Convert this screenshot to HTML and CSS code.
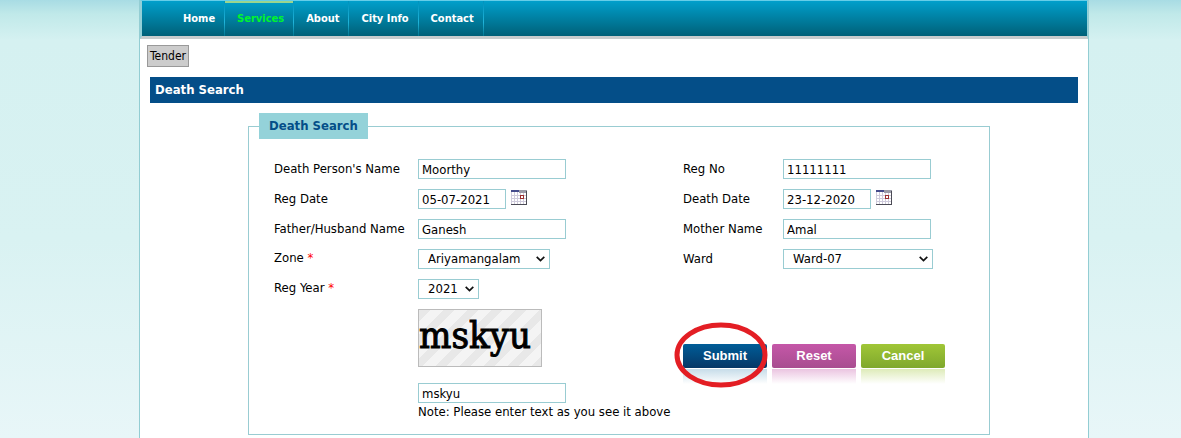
FILE: index.html
```html
<!DOCTYPE html>
<html lang="en">
<head>
  <meta charset="UTF-8">
  <meta name="viewport" content="width=device-width, initial-scale=1.0">
  <title>Death Search</title>
  <link rel="stylesheet" href="styles.css">
</head>
<body>

<div class="page">
  <nav class="menu">
    <a href="#">Home</a>
    <a href="#" class="active">Services</a>
    <a href="#">About</a>
    <a href="#">City Info</a>
    <a href="#">Contact</a>
  </nav>

  <div class="content">
    <a href="#" class="tender">Tender</a>
    <h1 class="title">Death Search</h1>

    <form onsubmit="return false">
      <fieldset class="search">
        <legend>Death Search</legend>
        <div class="fields">
          <label for="name">Death Person's Name</label>
          <div class="cell"><input type="text" id="name" value="Moorthy"></div>
          <label for="regno">Reg No</label>
          <div class="cell"><input type="text" id="regno" value="11111111"></div>

          <label for="regdate">Reg Date</label>
          <div class="cell">
            <input type="text" id="regdate" class="date" value="05-07-2021">
            <button type="button" class="cal" aria-label="Pick reg date">
              <svg width="16" height="15" viewBox="0 0 16 15" shape-rendering="crispEdges">
                <rect width="16" height="15" fill="#fff"/>
                <path d="M0 5.5h15M0 8.5h15M0 11.5h15M3.5 2v12M6.5 2v12M9.5 2v12M12.5 2v12M.5 2v12" stroke="#cfcbdc" fill="none"/>
                <rect width="8" height="2" fill="#454c8c"/>
                <rect x="8" width="8" height="3" fill="#9a9ba8"/>
                <rect x="9.5" y="5.5" width="3" height="3" fill="#fff" stroke="#9c3030"/>
                <path d="M15.5 1v14M0 14.5h16" stroke="#4b4b55" fill="none"/>
              </svg>
            </button>
          </div>
          <label for="deathdate">Death Date</label>
          <div class="cell">
            <input type="text" id="deathdate" class="date" value="23-12-2020">
            <button type="button" class="cal" aria-label="Pick death date">
              <svg width="16" height="15" viewBox="0 0 16 15" shape-rendering="crispEdges">
                <rect width="16" height="15" fill="#fff"/>
                <path d="M0 5.5h15M0 8.5h15M0 11.5h15M3.5 2v12M6.5 2v12M9.5 2v12M12.5 2v12M.5 2v12" stroke="#cfcbdc" fill="none"/>
                <rect width="8" height="2" fill="#454c8c"/>
                <rect x="8" width="8" height="3" fill="#9a9ba8"/>
                <rect x="9.5" y="5.5" width="3" height="3" fill="#fff" stroke="#9c3030"/>
                <path d="M15.5 1v14M0 14.5h16" stroke="#4b4b55" fill="none"/>
              </svg>
            </button>
          </div>

          <label for="father">Father/Husband Name</label>
          <div class="cell"><input type="text" id="father" value="Ganesh"></div>
          <label for="mother">Mother Name</label>
          <div class="cell"><input type="text" id="mother" value="Amal"></div>

          <label for="zone" class="required">Zone <span>*</span></label>
          <div class="cell"><select id="zone" class="zone"><option>Ariyamangalam</option></select></div>
          <label for="ward">Ward</label>
          <div class="cell"><select id="ward" class="ward"><option>Ward-07</option></select></div>

          <label for="year" class="required">Reg Year <span>*</span></label>
          <div class="cell"><select id="year" class="year"><option>2021</option></select></div>

          <div class="verify">
            <div class="captcha">mskyu</div>
            <input type="text" id="captcha" value="mskyu" aria-labelledby="note">
            <label id="note" for="captcha">Note: Please enter text as you see it above</label>
          </div>
          <div class="actions">
            <div class="marked">
              <button type="submit" class="btn submit">Submit</button>
              <svg class="ring" width="94" height="66" viewBox="0 0 94 66">
                <ellipse cx="47" cy="33" rx="44" ry="30" fill="none" stroke="#e31e24" stroke-width="5"/>
              </svg>
            </div>
            <button type="reset" class="btn reset">Reset</button>
            <button type="button" class="btn cancel">Cancel</button>
          </div>
        </div>
      </fieldset>
    </form>
  </div>
</div>

</body>
</html>
```
FILE: styles.css
```css
* { box-sizing:border-box; }
body { margin:0; font:13px/16px "DejaVu Sans Condensed", Tahoma, sans-serif; color:#000; background:#e8f6f8 linear-gradient(#a8dce4 0, #c0e9e9 14px, #d5f1f1 40px, #d9f2f2 240px, #e8f6f8 438px) no-repeat; }
.page { margin:0 92px 0 139px; min-height:100vh; background:#fff; border:solid #93cdd3; border-width:0 1px; }

.menu { display:flex; height:39px; padding:0 29px; background:linear-gradient(#009fcb, #006078) padding-box; border:solid #93d0d8; border-width:1px 1px 3px 2px; border-bottom-color:#c8cccd; border-top-color:#65cde8; }
.menu a { padding:10px 9px 0 12px; color:#fff; font-size:11px; font-weight:bold; text-decoration:none; border-right:1px solid; border-image:linear-gradient(#008fba, #20b4da 60%, #00728c) 1; }
.menu a.active { color:#00f52c; background:linear-gradient(#9bd58e 2px, transparent 2px); }

.content { padding:6px 10px 3px; }
.tender { display:block; width:fit-content; margin-left:-3px; padding:1px 2px; font-size:12px; line-height:18px; color:#000; text-decoration:none; background:#ccc; border:1px solid #999; }
.title { margin:10px 0; padding:0 5px; font-size:13px; line-height:26px; color:#fff; background:#044e88; }

.search { margin:0 88px 0 98px; padding:20px 25px 14px; border:1px solid #99ccd2; min-width:0; }
.search legend { margin-left:-15px; padding:0 10px; font-size:13px; font-weight:bold; line-height:26px; color:#044e88; background:#94d2d9; }
.fields { display:grid; grid-template-columns:144px 265px 100px 1fr; row-gap:10px; }
.fields label { line-height:20px; }
.fields .required { line-height:18px; }
.required span { color:#f00; }
.cell { display:flex; gap:5px; height:20px; }
input, select { height:20px; margin:0; font:inherit; color:#000; background:#fff; border:1px solid #99ccd2; border-radius:0; }
input { width:148px; padding:0 3px; }
.date { width:88px; }
.cal { display:block; height:15px; margin-top:1px; padding:0; background:none; border:0; cursor:pointer; }
.cal svg { display:block; }
select { padding:0 0 0 9px; appearance:none; background:#fff url("data:image/svg+xml,%3Csvg xmlns='http://www.w3.org/2000/svg' width='9' height='6'%3E%3Cpath d='M.7 .8l3.8 3.8L8.3 .8' fill='none' stroke='%23111' stroke-width='1.7'/%3E%3C/svg%3E") no-repeat right 4px center; }
.zone { width:132px; }
.ward { width:150px; }
.year { width:61px; }

.verify { grid-column:2; grid-row:6; display:flex; flex-direction:column; align-items:flex-start; white-space:nowrap; }
.fields .verify label { line-height:17px; }
.captcha { width:124px; height:58px; margin-bottom:16px; font:38px/50px "DejaVu Serif Condensed", "Liberation Serif", serif; -webkit-text-stroke:1px #000; background:repeating-linear-gradient(135deg, #e8e8e8 0 8px, #f4f4f4 8px 17px); border:1px solid #bbb; }
.actions { grid-column:3 / 5; grid-row:6; display:flex; gap:5px; padding-top:35px; align-items:flex-start; }
.marked { position:relative; }
.ring { position:absolute; left:-9px; top:-22px; pointer-events:none; }
.btn { position:relative; display:block; width:84px; height:24px; padding:0; font:bold 13px/24px "Liberation Sans", Arial, sans-serif; color:#fff; border:0; border-radius:2px; cursor:pointer; }
.btn::after { content:""; position:absolute; left:0; right:0; top:25px; height:15px; opacity:.35; }
.submit { background:linear-gradient(#005d98, #063766); }
.submit::after { background:linear-gradient(#5d9cc0, transparent); }
.reset { background:linear-gradient(#c557a8, #a84d90); }
.reset::after { background:linear-gradient(#c557a8, transparent); }
.cancel { background:linear-gradient(#a0c637, #7fa82c); }
.cancel::after { background:linear-gradient(#a0c637, transparent); }
```
